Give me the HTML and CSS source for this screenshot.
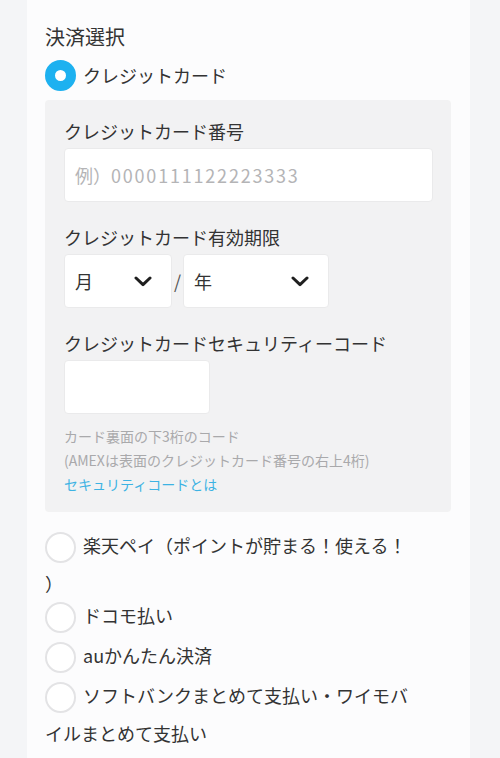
FILE: index.html
```html
<!DOCTYPE html>
<html lang="ja">
<head>
<meta charset="utf-8">
<title>決済選択</title>
<link rel="stylesheet" href="styles.css">
</head>
<body>
<div class="panel">
  <h2 class="title">決済選択</h2>
  <div class="option selected-row">
    <span class="radio checked"></span><span class="opt-text">クレジットカード</span>
  </div>
  <div class="card-box">
    <div class="field">
      <div class="label">クレジットカード番号</div>
      <div class="input wide"><span class="placeholder">例）<span class="digits">0000111122223333</span></span></div>
    </div>
    <div class="field">
      <div class="label">クレジットカード有効期限</div>
      <div class="expiry">
        <div class="select month">
          <span>月</span>
          <svg class="chev" viewBox="0 0 18 11" width="18" height="11"><path d="M2 2 L9 8.6 L16 2" fill="none" stroke="#1f1f1f" stroke-width="3" stroke-linecap="round" stroke-linejoin="round"/></svg>
        </div>
        <span class="slash">/</span>
        <div class="select year">
          <span>年</span>
          <svg class="chev" viewBox="0 0 18 11" width="18" height="11"><path d="M2 2 L9 8.6 L16 2" fill="none" stroke="#1f1f1f" stroke-width="3" stroke-linecap="round" stroke-linejoin="round"/></svg>
        </div>
      </div>
    </div>
    <div class="field">
      <div class="label">クレジットカードセキュリティーコード</div>
      <div class="input code"></div>
    </div>
    <div class="help">
      <div>カード裏面の下3桁のコード</div>
      <div>(AMEXは表面のクレジットカード番号の右上4桁)</div>
      <a class="help-link">セキュリティコードとは</a>
    </div>
  </div>
  <div class="options">
    <div class="option"><span class="radio"></span>楽天ペイ（ポイントが貯まる！使える！）</div>
    <div class="option"><span class="radio"></span>ドコモ払い</div>
    <div class="option"><span class="radio"></span>auかんたん決済</div>
    <div class="option"><span class="radio"></span>ソフトバンクまとめて支払い・ワイモバイルまとめて支払い</div>
  </div>
</div>
</body>
</html>
```

FILE: styles.css
```css
html, body {
  margin: 0;
  padding: 0;
  background: #f4f5f7;
  font-family: "Noto Sans CJK JP", "Noto Sans", sans-serif;
  color: #333333;
}

.panel {
  margin-left: 27px;
  width: 443px;
  min-height: 758px;
  box-sizing: border-box;
  background: #fcfcfd;
  padding: 22px 19px 0 18px;
}

.title {
  margin: 0;
  font-size: 20px;
  font-weight: 400;
  line-height: 30px;
}

.selected-row {
  display: flex;
  align-items: center;
  margin-top: 7px;
  height: 32px;
}

.radio {
  display: inline-block;
  box-sizing: border-box;
  width: 31px;
  height: 31px;
  border-radius: 50%;
  border: 2px solid #e3e3e5;
  background: #ffffff;
  vertical-align: middle;
  margin: 4px 7px 5px 0;
}

.radio.checked {
  border: 10.5px solid #1db1f0;
  background: #ffffff;
  margin: 0 7px 0 0;
}

.opt-text {
  font-size: 18px;
}

.card-box {
  margin-top: 9px;
  background: #f2f2f3;
  border-radius: 4px;
  padding: 18px 18px 16px 19px;
}

.field + .field {
  margin-top: 22px;
}

.label {
  font-size: 18px;
  line-height: 27px;
  margin-bottom: 3px;
}

.input {
  box-sizing: border-box;
  height: 54px;
  background: #ffffff;
  border: 1px solid #eaeaeb;
  border-radius: 4px;
  display: flex;
  align-items: center;
  padding-left: 10px;
}

.input.code {
  width: 146px;
}

.placeholder {
  font-size: 18px;
  color: #b4b4b6;
}

.digits {
  letter-spacing: 1.8px;
}

.expiry {
  display: flex;
  align-items: center;
}

.select {
  box-sizing: border-box;
  height: 54px;
  background: #ffffff;
  border: 1px solid #eaeaeb;
  border-radius: 4px;
  display: flex;
  align-items: center;
  justify-content: space-between;
  padding: 0 19px 0 10px;
  font-size: 18px;
}

.select.month {
  width: 108px;
}

.select.year {
  width: 146px;
}

.chev {
  display: block;
}

.slash {
  width: 11px;
  text-align: center;
  font-size: 18px;
  color: #555555;
}

.help {
  margin-top: 10px;
  font-size: 14px;
  line-height: 24px;
  color: #a9a9ab;
}

.help-link {
  display: block;
  color: #3db3e3;
}

.options {
  margin-top: 16px;
  width: 370px;
}

.option {
  font-size: 18px;
  line-height: 30px;
  line-break: anywhere;
}
```
